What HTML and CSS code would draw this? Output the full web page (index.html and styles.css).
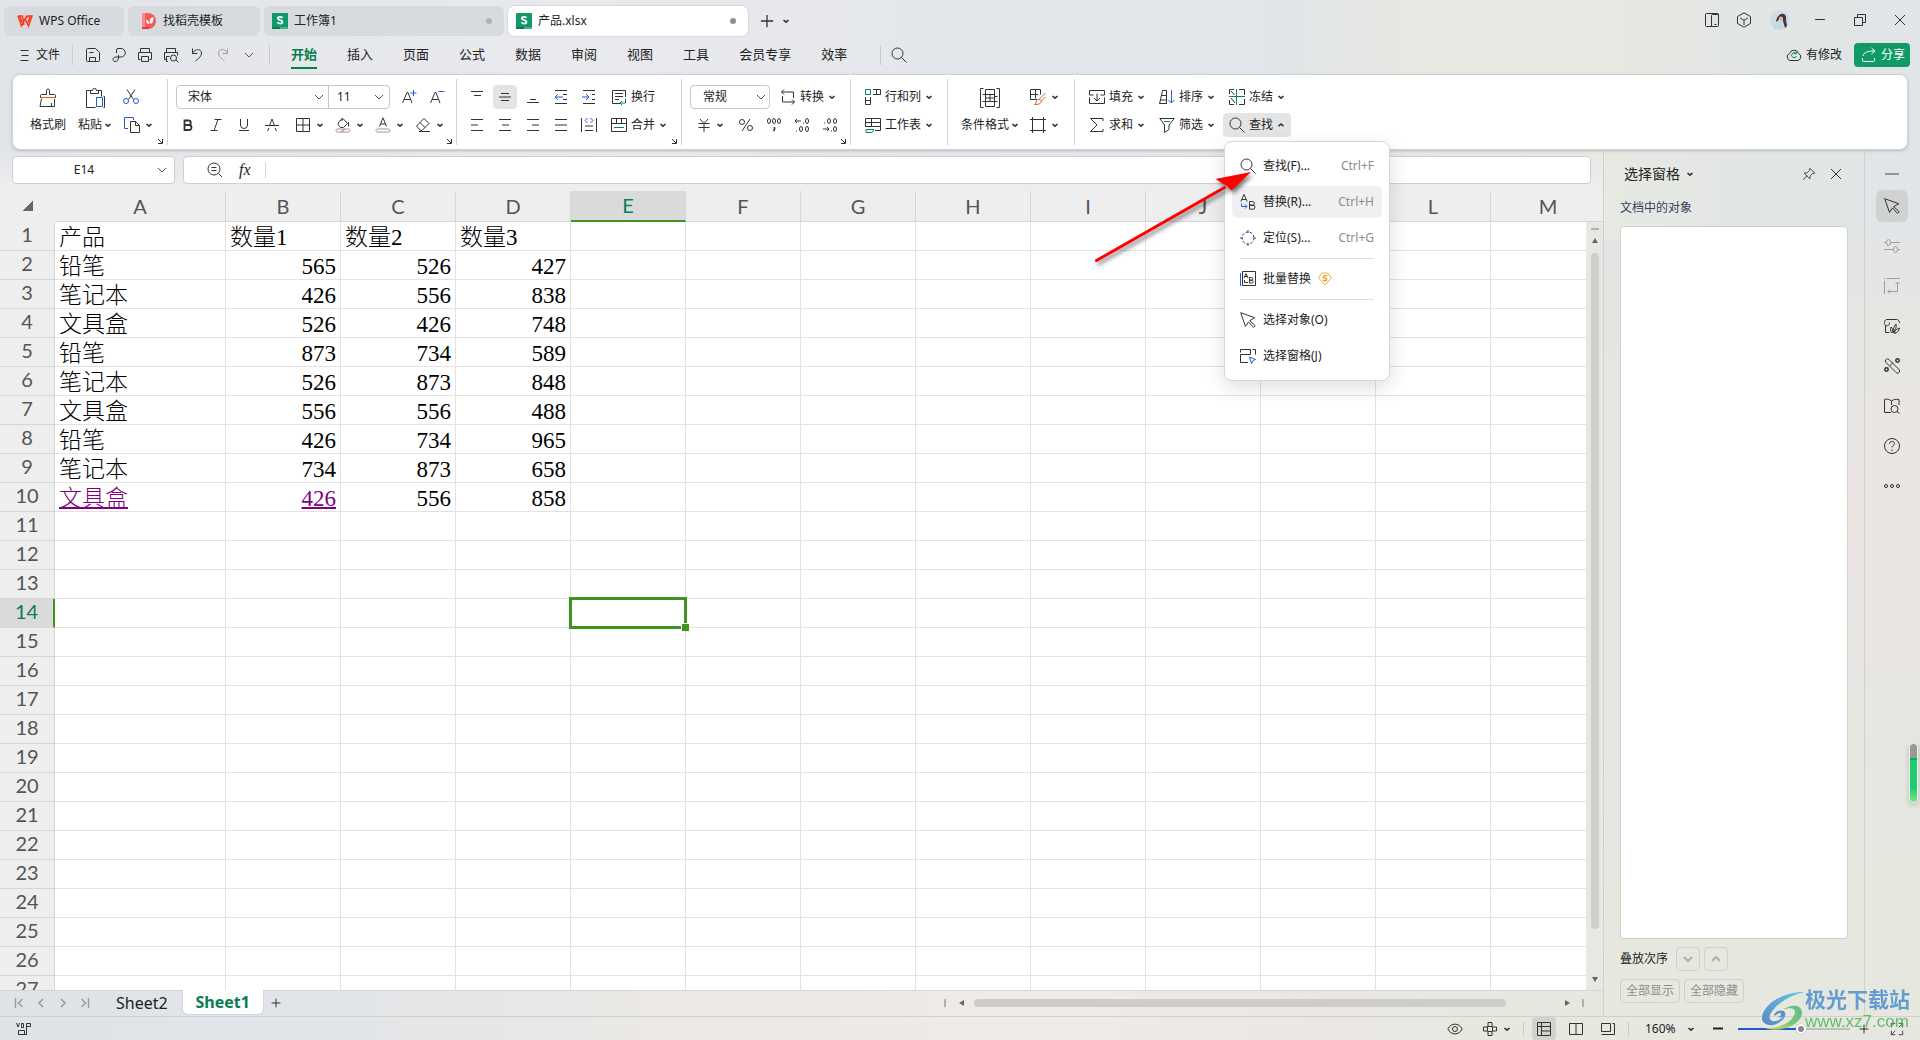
FILE: index.html
```html
<!DOCTYPE html>
<html lang="zh-CN">
<head>
<meta charset="utf-8">
<title>产品.xlsx - WPS Office</title>
<link rel="stylesheet" href="styles.css">
</head>
<body>
<svg class="sprite" aria-hidden="true">
  <symbol id="chev" viewBox="0 0 8 8"><path d="M1.5 3 4 5.2 6.5 3" stroke-width="1.6"/></symbol>
  <symbol id="chev-up" viewBox="0 0 8 8"><path d="M1.5 5.2 4 3 6.5 5.2" stroke-width="1.6"/></symbol>
  <symbol id="chev-wide" viewBox="0 0 10 10"><path d="M1 3l4 4 4-4"/></symbol>
  <symbol id="chev-wide-up" viewBox="0 0 10 10"><path d="M1 7l4-4 4 4"/></symbol>
  <symbol id="launch" viewBox="0 0 6 6"><path d="M1 1l4 4M5.5 1v4.500H1"/></symbol>
  <symbol id="sheet" viewBox="0 0 16 16"><rect width="16" height="16" rx="1" fill="#0f9a68" stroke="none"/><path d="M0 14h8v2H1a1 1 0 0 1-1-1z" fill="#087a50" stroke="none"/><path d="M8 14h8v1a1 1 0 0 1-1 1H8z" fill="#43b58b" stroke="none"/><path d="M10.500 4.800C10 3.600 6 3.300 5.800 5.300c0 2.200 4.700 1.300 4.700 3.600 0 2.200-4.400 2-5 .4" stroke="#fff" stroke-width="1.800"/></symbol>
  <symbol id="wps" viewBox="0 0 16 12"><path d="M1 1h4.500l1.500 9M1 1l3.500 10L8 4l3.500 7L15 1h-4l-3 3M8.500 1.200h3M3 1.500l2 6M13 1.500l-2 6" stroke="#fb3a22" stroke-width="1.500"/></symbol>
  <symbol id="docer" viewBox="0 0 16 16"><path d="M1 0h6a8 8 0 0 1 0 16H1z" fill="#f25c5c" stroke="none"/><path d="M1 0h3v16H1z" fill="#f78c8c" stroke="none"/><path d="M1 14h7v2H1z" fill="#e03b40" stroke="none"/><path d="M5 7c2 0 3 2 3 4C6 11 5 9 5 7zM12 4C9 5 8 8 9 11c3-1 4-4 3-7z" fill="#fff" stroke="none"/></symbol>
  <symbol id="plus" viewBox="0 0 16 16"><path d="M8 1v14M1 8h14" stroke-width="1.500"/></symbol>
  <symbol id="panel" viewBox="0 0 16 16"><rect x="1.500" y="1.500" width="13" height="13" rx="1"/><path d="M7.500 14.500v-11a1 1 0 0 1 1-1h6M10.500 12.500h2"/></symbol>
  <symbol id="cube" viewBox="0 0 16 16"><path d="M8 .8l6.500 3.700v7L8 15.200 1.500 11.500v-7zM4 6l4 2.300L12 6M8 8.300V13"/></symbol>
  <symbol id="minus" viewBox="0 0 12 12"><path d="M1 5.500h10"/></symbol>
  <symbol id="restore" viewBox="0 0 12 12"><path d="M.5 3.500h8v8h-8zM3.500 3.500v-3h8v8h-3"/></symbol>
  <symbol id="close" viewBox="0 0 12 12"><path d="M1 1l10 10M11 1L1 11"/></symbol>
  <symbol id="burger" viewBox="0 0 12 12"><path d="M1.500 1.500h8M2.500 6.500h7M1.500 11.500h8"/></symbol>
  <symbol id="save" viewBox="0 0 16 16"><path d="M1.500 2.500a1 1 0 0 1 1-1h8l4 4v8a1 1 0 0 1-1 1h-11a1 1 0 0 1-1-1zM4.500 14.500v-4h6v4M4.500 5.500h4"/></symbol>
  <symbol id="export" viewBox="0 0 16 16"><path d="M5.500 6V3a1.500 1.500 0 0 1 1.500-1.500h3a4 4 0 0 1 0 8.500H7.500c0 3-1 4.500-3.500 4.500-3 0-2.500-4.500.5-4.500H7.500V8"/></symbol>
  <symbol id="print" viewBox="0 0 16 16"><path d="M3.500 5V1.500h9V5M3.500 12.500h-2v-7h13v7h-2M4.500 9.500h7v5h-7z"/></symbol>
  <symbol id="preview" viewBox="0 0 16 16"><path d="M3.500 5V1.500h9V5M3.500 12.500h-2v-7h13v3M5 14.500H3.500v-5h3"/><circle cx="10.500" cy="11" r="3"/><path d="M13 13l2.500 2.500"/></symbol>
  <symbol id="undo" viewBox="0 0 16 16"><path d="M3.500 1.500v5h5M3.500 6.500c2-5 9-5 9-.5 0 4-4 6-6 8" /></symbol>
  <symbol id="redo" viewBox="0 0 16 16"><path d="M12.500 1.500v5h-5M12.500 6.500c-2-5-9-5-9-.5 0 4 4 6 6 8"/></symbol>
  <symbol id="find" viewBox="0 0 16 16"><circle cx="6.500" cy="6.500" r="5.500"/><path d="M10.500 10.500l5 5"/></symbol>
  <symbol id="cloud" viewBox="0 0 16 16"><path d="M4 13.500a3.700 3.700 0 0 1-.5-7 4.700 4.700 0 0 1 9 0 3.700 3.700 0 0 1-.5 7z"/><path class="g" d="M10 6.500A2.500 2.500 0 1 0 10.500 9M10.300 4.500v2.200H8"/></symbol>
  <symbol id="share" viewBox="0 0 16 16"><path d="M1.500 11v2.500a1 1 0 0 0 1 1h10a1 1 0 0 0 1-1V11M2 9c1-3.500 4-5 11-5M10.500 1L14 4l-3.500 3"/></symbol>
  <symbol id="brush" viewBox="0 0 20 20"><path d="M8.500 6.500V2.500a1.500 1.500 0 0 1 3 0v4h5a1 1 0 0 1 1 1v2h-15v-2a1 1 0 0 1 1-1zM3.500 10.500l-1.500 8h14.500V11M13.500 18.500V15"/><path class="o" d="M3 9.500h14"/></symbol>
  <symbol id="paste" viewBox="0 0 20 20"><path d="M5.500 2.500H1.500v17h9M13.500 2.500h3v6M5.500 2.500h2a2 2 0 0 1 4 0h2v3h-8zM18.500 8.500h1v11h-1"/><path class="b" d="M11.500 9.500h6v9h-6z"/></symbol>
  <symbol id="cut" viewBox="0 0 16 16"><path d="M4 .5l6.500 10M12 .5l-6.500 10"/><circle class="b" cx="3" cy="12" r="2.500"/><circle class="b" cx="13" cy="12" r="2.500"/></symbol>
  <symbol id="copy" viewBox="0 0 16 16"><path class="b" d="M4 11.500H.5V.5h9V3"/><path d="M6.500 4.500h5l4 4v7h-9zM11.500 4.500v4h4"/></symbol>
  <symbol id="bigger" viewBox="0 0 16 16"><path d="M1.500 14L6 3.500h1L11 14M3 10.500h6.500"/><path class="b" d="M12.500 1v6M9.500 4h6"/></symbol>
  <symbol id="smaller" viewBox="0 0 16 16"><path d="M1.500 14L6 3.500h1L11 14M3 10.500h6.500"/><path class="b" d="M9.500 2.500h6"/></symbol>
  <symbol id="bold" viewBox="0 0 16 16"><path d="M4.500 3.500h4a2.200 2.200 0 0 1 0 4.500h-4zM4.500 8h4.500a2.400 2.400 0 0 1 0 5H4.500z" stroke-width="1.800"/></symbol>
  <symbol id="italic" viewBox="0 0 16 16"><path d="M6.500 2.500h7M2.500 13.500h7M10 2.500l-4 11"/></symbol>
  <symbol id="under" viewBox="0 0 16 16"><path d="M4.500 2v6a3.500 3.500 0 0 0 7 0V2M3 13.500h10"/></symbol>
  <symbol id="strike" viewBox="0 0 16 16"><path d="M1 8.500h14M5.500 8.500L8 2l2.500 6.500M3.500 14l1.500-3M12.500 14L11 11"/></symbol>
  <symbol id="borders" viewBox="0 0 16 16"><path d="M1.500 1.500h13v13h-13zM8 1.500v13M1.500 8h13"/></symbol>
  <symbol id="fill" viewBox="0 0 16 16"><path d="M4 4.500l4-3 4.500 5-4 4H5.500L3 7.500zM7 1v3M13.500 5v4.500"/><rect x="1" y="12" width="14" height="3" rx="1.500" stroke="#999"/><path class="r" d="M6 15l4-3"/></symbol>
  <symbol id="color" viewBox="0 0 16 16"><path d="M4.500 9.500L8 .8l3.500 8.700M5.500 7h5"/><rect x="1" y="12" width="14" height="3" rx="1.500" stroke="#999"/></symbol>
  <symbol id="erase" viewBox="0 0 16 16"><path d="M1.500 9L9 1.500l5 5L7 13.500H5.500zM5 5.500l5 5M4 14.500h11"/></symbol>
  <symbol id="at" viewBox="0 0 16 16"><path d="M2 2.500h12M5 6.500h7"/></symbol>
  <symbol id="am" viewBox="0 0 16 16"><path d="M4 4.500h8M2 8h12M4 11.500h8"/></symbol>
  <symbol id="ab" viewBox="0 0 16 16"><path d="M5 10.500h6M2 13.500h12"/></symbol>
  <symbol id="ind-l" viewBox="0 0 16 16"><path d="M2 1.500h12M10 5.500h4M10 10.500h4M2 14.500h12"/><path class="b" d="M2 8h8M5 5L2 8l3 3"/></symbol>
  <symbol id="ind-r" viewBox="0 0 16 16"><path d="M2 1.500h12M11 5.500h3M11 10.500h3M2 14.500h12"/><path class="b" d="M1 8h7M5 5l3 3-3 3"/></symbol>
  <symbol id="al" viewBox="0 0 16 16"><path d="M2 2.500h12M2 8h7M2 13.500h12"/></symbol>
  <symbol id="ac" viewBox="0 0 16 16"><path d="M2 2.500h12M5 8h7M2 13.500h12"/></symbol>
  <symbol id="ar" viewBox="0 0 16 16"><path d="M2 2.500h12M7 8h7M2 13.500h12"/></symbol>
  <symbol id="aj" viewBox="0 0 16 16"><path d="M2 2.500h12M2 8h12M2 13.500h12"/></symbol>
  <symbol id="dist" viewBox="0 0 16 16"><path d="M.5 1v14M15.500 1v14M4 9h8M4 13.500h8"/><path class="b" d="M6.500 1L4 3.500 6.500 6M9.500 1L12 3.500 9.500 6"/></symbol>
  <symbol id="wrap" viewBox="0 0 16 16"><path d="M9 14.500H1.500v-13h13V8M4 4.500h8M4 7.500h8M4 10.500h4"/><path class="g" d="M14.500 9.500v4.500h-5M11 12l-2 2 2 2"/></symbol>
  <symbol id="merge" viewBox="0 0 16 16"><path d="M.5 1.500h15v13H.5zM.5 6.500h15M5.500 1.500v5M10.500 1.500v5"/><path class="g" d="M3 10.500h10"/></symbol>
  <symbol id="convert" viewBox="0 0 16 16"><path d="M4 .5L1.500 3 4 5.500M1.500 3h12v6M2.500 7v6h12M12 10.500l2.500 2.500-2.500 2.500"/></symbol>
  <symbol id="yen" viewBox="0 0 16 16"><path d="M4 2l4 4.500L12 2M2.500 6.500h11M2.500 10.500h11M8 6.500V15"/></symbol>
  <symbol id="pct" viewBox="0 0 16 16"><circle cx="4" cy="5" r="2.500"/><circle cx="12" cy="11" r="2.500"/><path d="M12 2L4 14"/></symbol>
  <symbol id="thou" viewBox="0 0 16 16"><ellipse cx="3" cy="4" rx="1.500" ry="2.500"/><ellipse cx="8" cy="4" rx="1.500" ry="2.500"/><ellipse cx="13" cy="4" rx="1.500" ry="2.500"/><path d="M8.500 10v2.500L7.500 14" stroke-width="1.600"/></symbol>
  <symbol id="dec-l" viewBox="0 0 16 16"><path d="M1 4h6M3 2L1 4l2 2M9 6h1M2 14h1"/><ellipse cx="13" cy="4" rx="1.500" ry="2.500"/><ellipse cx="7" cy="12" rx="1.500" ry="2.500"/><ellipse cx="13" cy="12" rx="1.500" ry="2.500"/></symbol>
  <symbol id="dec-r" viewBox="0 0 16 16"><path d="M1 12h6M5 10l2 2-2 2M9 14h1M2 6h1"/><ellipse cx="7" cy="4" rx="1.500" ry="2.500"/><ellipse cx="13" cy="4" rx="1.500" ry="2.500"/><ellipse cx="13" cy="12" rx="1.500" ry="2.500"/></symbol>
  <symbol id="rowcol" viewBox="0 0 16 16"><path class="g" d="M.5.5h5v5h-5z"/><path d="M8 .5h7.500v5H8M11.500.5v5M.5 8v7.500h5V8M.5 11.500h5"/></symbol>
  <symbol id="worksheet" viewBox="0 0 16 16"><path d="M.5 10V1.500h15v12H10M.5 5.500h15M6.500 1.500v8M.5 9.500h15"/><path class="g" d="M1 12.500h8l-2 3H1z"/></symbol>
  <symbol id="cond" viewBox="0 0 20 20"><path d="M3.500.5h-3v19h3M16.500.5h3v19h-3M5.500 1.500h9v17h-9zM5.500 6.500h9M2.500 6.500h3M2.500 13.500h15M14.500 8.500h3M10 6.500v7M5.500 10h9"/></symbol>
  <symbol id="tstyle" viewBox="0 0 16 16"><path d="M7 10.500H.5V.5h10v5M.5 5.500H8M5.500.5v9"/><path class="o" d="M15.500 4L9 10.500M15.500 8l-4 4M4.500 15.500c2 0 1-4 3.500-5 3-.5 4 2 2.500 3.500-1.500 1.500-4 1.500-6 1.500z"/></symbol>
  <symbol id="cellfmt" viewBox="0 0 16 16"><path d="M2.500 0v16M13.500 0v16M0 2.500h16M0 13.500h16"/></symbol>
  <symbol id="infill" viewBox="0 0 16 16"><path d="M.5 6V1.500h15V6M.5 6h4M11.500 6h4M.5 8.500v6h15v-6M8 4.500v7M5 9l3 3 3-3"/></symbol>
  <symbol id="sort" viewBox="0 0 16 16"><path d="M.5 15L3.500 1.500h4V15M1.500 11h6M2.500 6.500h5M.5 14.500h7"/><path class="b" d="M12.500 1v13M9.500 11l3 3 3-3"/></symbol>
  <symbol id="freeze" viewBox="0 0 16 16"><path d="M.5 5V.5H5M.5 11v4.500H5M10 .5h5.500V6M10 15.500h5.500V10M2 2l3.500 4M2 9l4 5"/><path class="g" d="M7.500 0v16M0 7.500h16"/></symbol>
  <symbol id="sum" viewBox="0 0 16 16"><path d="M14 4V1.500H1.500L8 8l-6.500 6.500H14V12"/></symbol>
  <symbol id="filter" viewBox="0 0 16 16"><path d="M.8 1.500h14.400L10 8v4.500l-4.500 3V8z"/><path class="g" d="M5 4.500h6"/></symbol>
  <symbol id="replace" viewBox="0 0 16 16"><path d="M.8 7.500L4 .5l3.200 7M2 5.500h4M9.500 7.500h3a1.800 1.800 0 0 1 0 3.700h-3zM9.500 11.200h3.500a2 2 0 0 1 0 4H9.500z"/><path class="b" d="M1.500 9.500v3h5M5 10.500l2 2-2 2"/></symbol>
  <symbol id="locate" viewBox="0 0 16 16"><circle cx="8" cy="8" r="6" stroke-dasharray="2.500 1.700"/><path class="b" d="M8 0v3M8 13v3M0 8h3M13 8h3"/></symbol>
  <symbol id="batch" viewBox="0 0 16 16"><path class="b" d="M.5 2v13"/><path d="M2.500.5h13v14h-13zM4 7l2-4.500L8 7M4.500 5.500h3M4.500 9v2.500H8M9.500 6.500h2a1.300 1.300 0 0 1 0 2.700h-2zM9.500 9.200h2.300a1.400 1.400 0 0 1 0 2.800H9.500z"/></symbol>
  <symbol id="coin" viewBox="0 0 14 14"><path d="M4 1h6l3.500 5L7 13 .5 6z" stroke="#f0ad3c"/><path d="M9 4.200C8 3.200 5 3.400 5.200 5c0 1.500 3.500.8 3.500 2.500 0 1.700-2.700 1.500-3.700.7" stroke="#f0a020" stroke-width="1.500"/></symbol>
  <symbol id="pointer" viewBox="0 0 16 16"><path d="M.7.7l14 5-5 3 5.500 5-1.700 1.700-5-5.500-3 4.500z"/></symbol>
  <symbol id="selpane" viewBox="0 0 16 16"><path d="M.5 4.500v-3h10v5M12.500 1.500h3v5M.5 6.500h10M.5 6.500v8H8"/><path class="b" d="M9.500 9l6 2.500-2.500 1-1.500 3z"/></symbol>
  <symbol id="zoomout" viewBox="0 0 16 16"><circle cx="7" cy="7" r="6"/><path d="M4.500 5.500h5M4.500 8.500h5M11.500 11.500l3.500 3.500"/></symbol>
  <symbol id="pin" viewBox="0 0 16 16"><path d="M9 1.500L14.500 7 12 7.500 9.500 10l-.5 3.500L2.500 7 6 6.500 8.500 4zM5.500 10L1.500 14.500"/></symbol>
  <symbol id="sliders" viewBox="0 0 16 16"><path d="M0 4.500h2.500M7 4.500h9M0 11.500h9M14 11.500h2"/><ellipse cx="4.500" cy="4.500" rx="2" ry="3"/><ellipse cx="11.500" cy="11.500" rx="2" ry="3"/></symbol>
  <symbol id="resize" viewBox="0 0 16 16"><path d="M0 .5h1.500M3 .5h13M.5 3v13M13.500 5v8.500H4M11.500 6l2-2 2 2M6 11.500l-2 2 2 2"/></symbol>
  <symbol id="beautify" viewBox="0 0 16 16"><path d="M5.500 14.500h-4v-7C-.5 5 .5 1.500 3 1.500h9.500c2 0 3 1.500 3 3.500M1.500 7.500c3 1 4-1 4-3M7 9c2 1.500 2 4 1 6-1.500-1.500-2-4-1-6zM12 6c1 3-1 6-2.500 9-.5-4 .5-7 2.500-9zM15.500 10c-.5 3-2.500 5-5 5.500 0-3 2.500-5 5-5.500z"/></symbol>
  <symbol id="tools" viewBox="0 0 16 16"><path d="M5 1.500l10 10a2 2 0 0 1-3 3l-10-10a2 2 0 0 1 3-3zM5.500 8L9 4.500"/><circle cx="13.500" cy="2.500" r="1.700" stroke-width="1.500"/><circle cx="2.500" cy="11.500" r="1.700" stroke-width="1.500"/></symbol>
  <symbol id="book" viewBox="0 0 16 16"><path d="M7 14.500H.5V1.500c3-1 5 0 7 1.500 2-1.500 4-2 7.500-1.500V7M7.500 3v4"/><circle cx="10.500" cy="11" r="3.500"/><path d="M13 13.500l2.500 2"/></symbol>
  <symbol id="help" viewBox="0 0 16 16"><circle cx="8" cy="8" r="7.500"/><path d="M5.500 6c0-3.500 5-3.300 5-.5 0 1.800-2.500 2-2.500 4M8 11.500v1.500"/></symbol>
  <symbol id="more" viewBox="0 0 16 16"><circle cx="2" cy="8" r="1.500"/><circle cx="8" cy="8" r="1.500"/><circle cx="14" cy="8" r="1.500"/></symbol>
  <symbol id="first" viewBox="0 0 10 10"><path d="M1.500 0v10M8.500 1l-4 4 4 4"/></symbol>
  <symbol id="prev" viewBox="0 0 10 10"><path d="M7 1L3 5l4 4"/></symbol>
  <symbol id="next" viewBox="0 0 10 10"><path d="M3 1l4 4-4 4"/></symbol>
  <symbol id="last" viewBox="0 0 10 10"><path d="M8.500 0v10M1.500 1l4 4-4 4"/></symbol>
  <symbol id="macro" viewBox="0 0 16 16"><path d="M.5 2l1.500 4L3.500 2M5.500 2.500v4M5.500 2.500h2v4h-2M10.500 13V2.500h4v3h-4M2.500 13.500v-4h6v4zM2.500 13.500H11"/></symbol>
  <symbol id="eye" viewBox="0 0 16 16"><path d="M.8 8C4 1.500 12 1.500 15.200 8 12 14.500 4 14.500.8 8z"/><circle cx="8" cy="8" r="2.500"/></symbol>
  <symbol id="cross" viewBox="0 0 16 16"><path d="M6 5V1.500h4V5M6 11v3.500h4V11M5 6H1.500v4H5M11 6h3.500v4H11M5.500 5.500h5v5h-5z"/></symbol>
  <symbol id="v-normal" viewBox="0 0 16 16"><path d="M1.500 1.500h13v13h-13zM1.500 5.500h13M5.500 1.500v13M5.500 10h9"/></symbol>
  <symbol id="v-page" viewBox="0 0 16 16"><path d="M1.500 2.500h13v11h-13zM8 2.500v11"/></symbol>
  <symbol id="v-read" viewBox="0 0 16 16"><path d="M1.500 2.500h9v8h-9zM1.500 13.500h13V2.500h-2"/></symbol>
  <symbol id="full" viewBox="0 0 16 16"><path d="M10 1.500h4.500V6M14.500 1.500L10 6M6 14.500H1.500V10M1.500 14.500L6 10M1.500 6V1.500H6M14.500 10v4.500H10"/></symbol>
</svg>

<header class="tabs">
  <button class="tab t-home"><svg class="i16"><use href="#wps"/></svg>WPS Office</button>
  <button class="tab t-docer"><svg class="i16"><use href="#docer"/></svg>找稻壳模板</button>
  <button class="tab t-file"><svg class="i16"><use href="#sheet"/></svg>工作簿1<i class="dot"></i></button>
  <button class="tab t-file active"><svg class="i16"><use href="#sheet"/></svg>产品.xlsx<i class="dot"></i></button>
  <button class="plain" aria-label="新建"><svg class="i14"><use href="#plus"/></svg></button>
  <button class="plain" aria-label="标签列表"><svg class="c8"><use href="#chev"/></svg></button>
  <div class="win">
    <button class="plain narrow" aria-label="面板"><svg class="i16"><use href="#panel"/></svg></button>
    <button class="plain narrow" aria-label="应用"><svg class="i16"><use href="#cube"/></svg></button>
    <button class="plain" aria-label="账号"><svg class="avatar" viewBox="0 0 20 20"><circle cx="10" cy="10" r="10" fill="#cfdde6"/><path d="M11 4c3-1 6 1 5 6l1 6-2 2-2-7-1-3-3 1-2 3-1-1c1-3 2-6 5-7z" fill="#44353c"/><path d="M9 8c1-2 4-2 4 1s-2 4-3 3z" fill="#e2b5ac"/><path d="M3 18l3-6 4-1 3 2v6c-4 1-7 1-10-1z" fill="#c3dbe4"/></svg></button>
    <button class="plain" aria-label="最小化"><svg class="i12"><use href="#minus"/></svg></button>
    <button class="plain" aria-label="还原"><svg class="i12"><use href="#restore"/></svg></button>
    <button class="plain" aria-label="关闭"><svg class="i12"><use href="#close"/></svg></button>
  </div>
</header>

<nav class="menubar">
  <button class="plain file"><svg class="i12"><use href="#burger"/></svg>文件</button>
  <i class="bar"></i>
  <div class="quick">
    <button class="plain" aria-label="保存"><svg class="i16"><use href="#save"/></svg></button>
    <button class="plain" aria-label="输出"><svg class="i16"><use href="#export"/></svg></button>
    <button class="plain" aria-label="打印"><svg class="i16"><use href="#print"/></svg></button>
    <button class="plain" aria-label="打印预览"><svg class="i16"><use href="#preview"/></svg></button>
    <button class="plain" aria-label="撤销"><svg class="i16"><use href="#undo"/></svg></button>
    <button class="plain dim" aria-label="恢复"><svg class="i16"><use href="#redo"/></svg></button>
    <button class="plain" aria-label="更多"><svg class="i10"><use href="#chev-wide"/></svg></button>
  </div>
  <i class="bar"></i>
  <div class="menus">
    <a href="#start" class="on">开始</a><a href="#insert">插入</a><a href="#page">页面</a><a href="#formula">公式</a><a href="#data">数据</a><a href="#review">审阅</a><a href="#view">视图</a><a href="#tool">工具</a><a href="#member">会员专享</a><a href="#effect">效率</a>
  </div>
  <i class="bar"></i>
  <button class="plain search" aria-label="搜索"><svg class="i16"><use href="#find"/></svg></button>
  <button class="plain changed"><svg class="i16"><use href="#cloud"/></svg>有修改</button>
  <button class="share"><svg class="i16"><use href="#share"/></svg>分享</button>
</nav>

<section class="ribbon">
  <div class="group g-clip">
    <button class="tall"><svg class="i20"><use href="#brush"/></svg><span>格式刷</span></button>
    <button class="tall"><svg class="i20"><use href="#paste"/></svg><span>粘贴<svg class="c8"><use href="#chev"/></svg></span></button>
    <div class="rows">
      <div class="row"><button class="sq" aria-label="剪切"><svg class="i16"><use href="#cut"/></svg></button></div>
      <div class="row"><button class="dd" aria-label="复制"><svg class="i16"><use href="#copy"/></svg><svg class="c8"><use href="#chev"/></svg></button></div>
    </div>
    <svg class="launch"><use href="#launch"/></svg>
  </div>
  <div class="group g-font">
    <div class="rows">
      <div class="row">
        <div class="pick fontpick">
          <select class="fname" aria-label="字体"><option>宋体</option></select><svg class="i10"><use href="#chev-wide"/></svg>
          <select class="fsize" aria-label="字号"><option>11</option></select><svg class="i10"><use href="#chev-wide"/></svg>
        </div>
        <button class="sq grow" aria-label="增大字号"><svg class="i16"><use href="#bigger"/></svg></button>
        <button class="sq" aria-label="减小字号"><svg class="i16"><use href="#smaller"/></svg></button>
      </div>
      <div class="row">
        <button class="sq" aria-label="加粗"><svg class="i16"><use href="#bold"/></svg></button>
        <button class="sq" aria-label="倾斜"><svg class="i16"><use href="#italic"/></svg></button>
        <button class="sq" aria-label="下划线"><svg class="i16"><use href="#under"/></svg></button>
        <button class="sq" aria-label="删除线"><svg class="i16"><use href="#strike"/></svg></button>
        <button class="dd" aria-label="边框"><svg class="i16"><use href="#borders"/></svg><svg class="c8"><use href="#chev"/></svg></button>
        <button class="dd" aria-label="填充颜色"><svg class="i16"><use href="#fill"/></svg><svg class="c8"><use href="#chev"/></svg></button>
        <button class="dd" aria-label="字体颜色"><svg class="i16"><use href="#color"/></svg><svg class="c8"><use href="#chev"/></svg></button>
        <button class="dd" aria-label="清除"><svg class="i16"><use href="#erase"/></svg><svg class="c8"><use href="#chev"/></svg></button>
      </div>
    </div>
    <svg class="launch"><use href="#launch"/></svg>
  </div>
  <div class="group g-align">
    <div class="rows">
      <div class="row">
        <button class="sq" aria-label="顶端对齐"><svg class="i16"><use href="#at"/></svg></button>
        <button class="sq pressed" aria-label="垂直居中"><svg class="i16"><use href="#am"/></svg></button>
        <button class="sq" aria-label="底端对齐"><svg class="i16"><use href="#ab"/></svg></button>
        <button class="sq" aria-label="减少缩进"><svg class="i16"><use href="#ind-l"/></svg></button>
        <button class="sq" aria-label="增加缩进"><svg class="i16"><use href="#ind-r"/></svg></button>
        <button class="lb"><svg class="i16"><use href="#wrap"/></svg>换行</button>
      </div>
      <div class="row">
        <button class="sq" aria-label="左对齐"><svg class="i16"><use href="#al"/></svg></button>
        <button class="sq" aria-label="水平居中"><svg class="i16"><use href="#ac"/></svg></button>
        <button class="sq" aria-label="右对齐"><svg class="i16"><use href="#ar"/></svg></button>
        <button class="sq" aria-label="两端对齐"><svg class="i16"><use href="#aj"/></svg></button>
        <button class="sq" aria-label="分散对齐"><svg class="i16"><use href="#dist"/></svg></button>
        <button class="lb"><svg class="i16"><use href="#merge"/></svg>合并<svg class="c8"><use href="#chev"/></svg></button>
      </div>
    </div>
    <svg class="launch"><use href="#launch"/></svg>
  </div>
  <div class="group g-num">
    <div class="rows">
      <div class="row">
        <div class="pick numpick"><select aria-label="数字格式"><option>常规</option></select><svg class="i10"><use href="#chev-wide"/></svg></div>
        <button class="lb"><svg class="i16"><use href="#convert"/></svg>转换<svg class="c8"><use href="#chev"/></svg></button>
      </div>
      <div class="row">
        <button class="dd" aria-label="货币"><svg class="i16"><use href="#yen"/></svg><svg class="c8"><use href="#chev"/></svg></button>
        <button class="sq" aria-label="百分比"><svg class="i16"><use href="#pct"/></svg></button>
        <button class="sq" aria-label="千位分隔"><svg class="i16"><use href="#thou"/></svg></button>
        <button class="sq" aria-label="增加小数"><svg class="i16"><use href="#dec-l"/></svg></button>
        <button class="sq" aria-label="减少小数"><svg class="i16"><use href="#dec-r"/></svg></button>
      </div>
    </div>
    <svg class="launch"><use href="#launch"/></svg>
  </div>
  <div class="group g-rows">
    <div class="rows">
      <div class="row"><button class="lb"><svg class="i16"><use href="#rowcol"/></svg>行和列<svg class="c8"><use href="#chev"/></svg></button></div>
      <div class="row"><button class="lb"><svg class="i16"><use href="#worksheet"/></svg>工作表<svg class="c8"><use href="#chev"/></svg></button></div>
    </div>
  </div>
  <div class="group g-style">
    <button class="tall"><svg class="i20"><use href="#cond"/></svg><span>条件格式<svg class="c8"><use href="#chev"/></svg></span></button>
    <div class="rows">
      <div class="row"><button class="dd" aria-label="表格样式"><svg class="i16"><use href="#tstyle"/></svg><svg class="c8"><use href="#chev"/></svg></button></div>
      <div class="row"><button class="dd" aria-label="单元格样式"><svg class="i16"><use href="#cellfmt"/></svg><svg class="c8"><use href="#chev"/></svg></button></div>
    </div>
  </div>
  <div class="group g-edit">
    <div class="rows">
      <div class="row">
        <button class="lb"><svg class="i16"><use href="#infill"/></svg>填充<svg class="c8"><use href="#chev"/></svg></button>
        <button class="lb"><svg class="i16"><use href="#sort"/></svg>排序<svg class="c8"><use href="#chev"/></svg></button>
        <button class="lb"><svg class="i16"><use href="#freeze"/></svg>冻结<svg class="c8"><use href="#chev"/></svg></button>
      </div>
      <div class="row">
        <button class="lb"><svg class="i16"><use href="#sum"/></svg>求和<svg class="c8"><use href="#chev"/></svg></button>
        <button class="lb"><svg class="i16"><use href="#filter"/></svg>筛选<svg class="c8"><use href="#chev"/></svg></button>
        <div class="findwrap">
          <button class="lb pressed"><svg class="i16"><use href="#find"/></svg>查找<svg class="c8"><use href="#chev-up"/></svg></button>
          <div class="popup" role="menu">
            <button role="menuitem"><svg class="i16"><use href="#find"/></svg>查找(F)...<kbd>Ctrl+F</kbd></button>
            <button role="menuitem" class="hover"><svg class="i16"><use href="#replace"/></svg>替换(R)...<kbd>Ctrl+H</kbd></button>
            <button role="menuitem"><svg class="i16"><use href="#locate"/></svg>定位(S)...<kbd>Ctrl+G</kbd></button>
            <hr>
            <button role="menuitem"><svg class="i16"><use href="#batch"/></svg>批量替换<svg class="i14"><use href="#coin"/></svg></button>
            <hr>
            <button role="menuitem"><svg class="i16"><use href="#pointer"/></svg>选择对象(O)</button>
            <button role="menuitem"><svg class="i16"><use href="#selpane"/></svg>选择窗格(J)</button>
            <svg class="arrow" viewBox="0 0 170 104"><path d="M7.500 91.500l128-73" stroke="#fe0000" stroke-width="3" stroke-linecap="round"/><path d="M162 3l-19.500 18.500-4.500-4.500-11.500-7z" fill="#fe0000"/></svg>
          </div>
        </div>
      </div>
    </div>
  </div>
</section>

<main class="work">
  <section class="book">
    <div class="formula">
      <label class="namebox"><input value="E14" aria-label="名称框"><svg class="i10"><use href="#chev-wide"/></svg></label>
      <div class="fbox"><svg class="i16"><use href="#zoomout"/></svg><em>fx</em><input aria-label="编辑栏"></div>
    </div>
    <div class="sheet">
      <div class="gridwrap">
        <table class="grid">
          <colgroup><col class="c-no"><col class="c-a"><col class="c-n" span="12"></colgroup>
          <thead><tr id="heads"></tr></thead>
          <tbody id="cells"></tbody>
        </table>
      </div>
      <div class="vscroll"><div class="corner"></div><i class="tick"></i><i class="tri up"></i><i class="thumb"></i><i class="tri down"></i></div>
    </div>
    <div class="sheetbar">
      <button class="plain" aria-label="首个"><svg class="i10"><use href="#first"/></svg></button>
      <button class="plain" aria-label="上一个"><svg class="i10"><use href="#prev"/></svg></button>
      <button class="plain" aria-label="下一个"><svg class="i10"><use href="#next"/></svg></button>
      <button class="plain" aria-label="末个"><svg class="i10"><use href="#last"/></svg></button>
      <button class="stab">Sheet2</button>
      <button class="stab on">Sheet1</button>
      <button class="plain add" aria-label="新建工作表"><svg class="i10"><use href="#plus"/></svg></button>
      <div class="hscroll"><i class="tick"></i><i class="tri left"></i><i class="thumb"></i><i class="tri right"></i><i class="tick"></i></div>
    </div>
  </section>
  <aside class="pane">
    <div class="phead"><h2>选择窗格</h2><svg class="c8"><use href="#chev"/></svg>
      <button class="plain pinbtn" aria-label="固定"><svg class="i14"><use href="#pin"/></svg></button>
      <button class="plain" aria-label="关闭窗格"><svg class="i12"><use href="#close"/></svg></button></div>
    <p>文档中的对象</p>
    <div class="objects"></div>
    <div class="order"><span>叠放次序</span><button class="ob" aria-label="下移"><svg class="i10"><use href="#chev-wide"/></svg></button><button class="ob" aria-label="上移"><svg class="i10"><use href="#chev-wide-up"/></svg></button></div>
    <div class="order vis"><button class="ob">全部显示</button><button class="ob">全部隐藏</button></div>
  </aside>
  <nav class="side">
    <svg class="collapse" viewBox="0 0 14 2"><path d="M0 1h14" stroke-width="2"/></svg>
    <button class="sb on" aria-label="选择"><svg class="i16"><use href="#pointer"/></svg></button>
    <button class="sb dim" aria-label="属性"><svg class="i16"><use href="#sliders"/></svg></button>
    <button class="sb dim" aria-label="调整"><svg class="i16"><use href="#resize"/></svg></button>
    <button class="sb" aria-label="美化"><svg class="i16"><use href="#beautify"/></svg></button>
    <button class="sb" aria-label="工具"><svg class="i16"><use href="#tools"/></svg></button>
    <button class="sb" aria-label="查阅"><svg class="i16"><use href="#book"/></svg></button>
    <button class="sb" aria-label="帮助"><svg class="i16"><use href="#help"/></svg></button>
    <button class="sb" aria-label="更多"><svg class="i16"><use href="#more"/></svg></button>
    <i class="meter"></i>
  </nav>
</main>

<footer class="status">
  <button class="plain" aria-label="宏"><svg class="i16"><use href="#macro"/></svg></button>
  <div class="views">
    <button class="sq" aria-label="护眼"><svg class="i16"><use href="#eye"/></svg></button>
    <button class="dd" aria-label="阅读布局"><svg class="i16"><use href="#cross"/></svg><svg class="c8"><use href="#chev"/></svg></button>
    <i class="bar"></i>
    <button class="vb on" aria-label="普通视图"><svg class="i16"><use href="#v-normal"/></svg></button>
    <button class="vb" aria-label="分页预览"><svg class="i16"><use href="#v-page"/></svg></button>
    <button class="vb" aria-label="页面布局"><svg class="i16"><use href="#v-read"/></svg></button>
    <i class="bar"></i>
    <button class="plain zoom">160%<svg class="c8"><use href="#chev"/></svg></button>
    <button class="plain bold" aria-label="缩小"><svg class="i12"><use href="#minus"/></svg></button>
    <input type="range" min="0" max="100" value="57" aria-label="缩放比例">
    <button class="plain bold" aria-label="放大"><svg class="i10"><use href="#plus"/></svg></button>
    <button class="plain fullbtn" aria-label="全屏"><svg class="i14"><use href="#full"/></svg></button>
  </div>
</footer>

<div class="mark">
  <svg viewBox="0 0 44 42"><defs><linearGradient id="ga" x1="0" y1="1" x2="1" y2="0"><stop offset="0" stop-color="#4a7fc4"/><stop offset="1" stop-color="#5cc4e8"/></linearGradient><linearGradient id="gb" x1="0" y1="1" x2="1" y2="0"><stop offset="0" stop-color="#e3e04a"/><stop offset=".5" stop-color="#6cc56c"/><stop offset="1" stop-color="#4fb888"/></linearGradient></defs><path d="M44 1C22 0 0 15 1 28c1 7 12 8 18 3 6-4 7-9 3-11 1 5-2 9-7 10-6 1-8-3-5-8C15 13 29 4 44 1z" fill="url(#ga)"/><path d="M4 37c11 1 28-5 30-15 1-5-6-6-12-3 5-5 18-7 19 2 1 12-22 22-37 16z" fill="url(#gb)"/><path d="M13 24c2-5 10-6 11-2 0 3-4 5-7 4 3-1 4-4 2-4-3 0-4 4-6 2z" fill="#4a86c8"/></svg>
  <div><strong>极光下载站</strong><span>www.xz7.com</span></div>
</div>
<script src="grid.js"></script>
</body>
</html>
```
FILE: styles.css
```css
* { box-sizing: border-box; }
body {
  margin: 0; height: 100vh; display: flex; flex-direction: column; overflow: hidden;
  font: 12px/16px "Noto Sans", "Noto Sans CJK SC", sans-serif; color: #222;
  background:
    radial-gradient(ellipse 500px 300px at 98% 50%, #ebe5e2, transparent),
    linear-gradient(90deg, #dfe3e8 0, #e2e5e8 18%, #ece9e5 35%, #efebe8 55%, #ebe7e4 68%, #e7e8e0 78%, #e6e8e0 100%) bottom / 100% 70px no-repeat,
    linear-gradient(90deg, #e1e4e9 0, #e9eaed 30%, #e3e6eb 52%, #e2e5e9 66%, #e7e9e2 75%, #e7e9e2 83%, #e1e5e4 93%, #e2e5e8 100%) top / 100% 240px no-repeat,
    linear-gradient(180deg, #e2e5e4, #e4e6e2 60%, #e7e9df);
}
button, input, select { font: inherit; color: inherit; margin: 0; padding: 0; border: 0; background: none; outline: 0; }
button { display: flex; align-items: center; white-space: nowrap; }
a { color: inherit; text-decoration: none; }
svg { fill: none; stroke: #333; stroke-width: 1; flex: none; display: block; }
.sprite { position: absolute; width: 0; height: 0; }
.g { stroke: #0b8457; } .b { stroke: #2a57e0; } .o { stroke: #d0602a; } .r { stroke: #e05050; }
.i20 { width: 20px; height: 20px; } .i16 { width: 16px; height: 16px; } .i14 { width: 14px; height: 14px; }
.i12 { width: 12px; height: 12px; } .i10 { width: 10px; height: 10px; stroke: #555; } .c8 { width: 8px; height: 8px; }
.bar { width: 1px; height: 20px; background: #c8cacd; }
.dim svg { stroke: #9b9d9e; }

.tabs { display: flex; align-items: flex-start; height: 40px; padding: 6px 0 0 4px; }
.tab { height: 30px; border-radius: 6px; background: #d7dade; margin-right: 4px; }
.tab .i16 { margin-right: 6px; }
.t-home { width: 120px; padding-left: 13px; }
.t-docer { width: 132px; padding-left: 13px; }
.t-file { width: 240px; padding: 0 12px 0 8px; }
.active { background: #fff; box-shadow: 0 0 2px #b5b8bb; }
.dot { width: 6px; height: 6px; border-radius: 3px; margin-left: auto; background: #b0b3b5; }
.active .dot { background: #8f8f8f; }
.tabs .plain { height: 30px; margin-left: 8px; }
.win { display: flex; margin-left: auto; align-items: center; }
.win .plain { margin-left: 0; width: 40px; justify-content: center; height: 28px; }
.tabs .win .plain { margin-left: 0; height: 28px; }
.win .narrow { width: 32px; }
.avatar { width: 20px; height: 20px; stroke: none; }

.menubar { display: flex; align-items: center; height: 34px; padding: 0 10px 4px 19px; }
.file { gap: 5px; width: 53px; }
.quick { display: flex; width: 196px; padding-left: 7px; }
.quick .plain { width: 26px; height: 26px; justify-content: center; }
.menus { display: flex; gap: 30px; margin-left: 21px; font-size: 13px; line-height: 24px; width: 589px; }
.menus a { height: 27px; border-bottom: 2px solid transparent; white-space: nowrap; }
.menus .on { color: #0a7d52; font-weight: 700; border-color: #0a7d52; }
.search { margin-left: 10px; }
.changed { margin-left: auto; gap: 4px; margin-right: 12px; }
.share { background: #0f9a68; color: #fff; height: 24px; width: 56px; border-radius: 4px; gap: 4px; padding-left: 7px; }
.share svg { stroke: #fff; }

.ribbon { display: flex; margin: 0 12px; min-height: 76px; background: #fff; border: 1px solid #cfd1d3; border-radius: 8px; box-shadow: 0 1px 3px #b9bbbe; padding: 4px 0; position: relative; z-index: 2; }
.group { position: relative; border-right: 1px solid #d2d2d2; height: 66px; padding-top: 6px; display: flex; }
.g-clip { width: 155px; padding-left: 17px; } .g-font { width: 289px; padding-left: 6px; } .g-align { width: 225px; padding-left: 6px; }
.g-num { width: 169px; padding-left: 8px; } .g-rows { width: 97px; padding-left: 10px; } .g-style { width: 127px; padding-left: 13px; } .g-edit { border: 0; padding-left: 8px; }
.rows { display: flex; flex-direction: column; gap: 4px; }
.row { display: flex; height: 24px; align-items: center; }
.sq { width: 28px; height: 24px; justify-content: center; border-radius: 4px; }
.pressed { background: #e4e4e4; }
.g-align .sq.pressed { width: 24px; margin: 0 2px; }
.dd { width: 40px; height: 24px; padding-left: 7px; gap: 5px; }
.g-font .dd { padding-left: 9px; }
.g-num .dd { width: 42px; padding-left: 6px; gap: 4px; }
.lb { height: 24px; padding: 0 6px 0 4px; gap: 4px; border-radius: 4px; }
.g-align .lb { padding-left: 8px; }
.g-edit .lb { margin-right: 2px; width: 68px; padding: 0 4px 0 6px; }
.tall { flex-direction: column; height: 52px; padding-top: 3px; }
.tall span { display: flex; align-items: center; gap: 2px; margin-top: 9px; }
.g-clip .tall + .tall { margin-left: 12px; }
.tall + .rows { margin-left: 4px; }
.g-clip .tall + .rows { margin-left: 5px; }
.launch { width: 6px; height: 6px; position: absolute; right: 4px; bottom: 1px; }
.pick { display: flex; align-items: center; height: 24px; border: 1px solid #c3c5c8; border-radius: 4px; }
.pick select { appearance: none; height: 22px; }
.fontpick { width: 214px; padding-right: 5px; margin-left: 2px; }
.fontpick .fname { flex: 1; padding-left: 11px; }
.fontpick .fsize { width: 46px; margin-left: 4px; padding-left: 8px; border-left: 1px solid #c3c5c8; }
.grow { margin-left: 5px; }
.numpick { width: 80px; padding: 0 3px 0 12px; }
.numpick select { flex: 1; width: 0; }
.g-num .numpick + .lb { padding-left: 10px; }

.findwrap { position: relative; }
.popup { position: absolute; left: 1px; top: 28px; width: 166px; padding: 8px 7px; display: flex; flex-direction: column; gap: 4px; background: #fff; border: 1px solid #d6d8da; border-radius: 8px; box-shadow: 0 6px 20px #0002; }
.popup button { height: 32px; padding: 0 8px; gap: 7px; border-radius: 6px; flex: none; }
.popup .hover { background: #f0f0f0; }
.popup kbd { margin-left: auto; font: inherit; color: #8c8c8c; }
.popup hr { border: 0; height: 1px; background: #ddd; margin: 0 8px; flex: none; }
.arrow { position: absolute; left: -136px; top: 27px; width: 170px; height: 104px; overflow: visible; stroke: none; filter: drop-shadow(2px 3px 2px #0008); pointer-events: none; }

.work { flex: 1; display: flex; min-height: 0; }
.book { flex: 1; min-width: 0; display: flex; flex-direction: column; }
.formula { display: flex; height: 41px; padding: 6px 12px 7px; gap: 8px; background: linear-gradient(#eee0, #eee); }
.namebox, .fbox { display: flex; align-items: center; height: 28px; background: #fff; border: 1px solid #cdcfd0; border-radius: 4px; }
.namebox { width: 163px; padding-right: 7px; }
.namebox input { flex: 1; width: 0; text-align: center; padding-right: 2px; }
.fbox { flex: 1; padding-left: 23px; }
.fbox em { font: italic 16px/20px "Liberation Serif", serif; margin-left: 16px; width: 26px; }
.fbox input { flex: 1; height: 16px; border-left: 1px solid #d5d5d5; }

.sheet { flex: 1; min-height: 0; display: flex; }
.gridwrap { flex: 1; overflow: hidden; background: #fff; min-width: 0; }
.grid { table-layout: fixed; border-collapse: separate; border-spacing: 0; width: 1606px; }
.c-no { width: 55px; } .c-a { width: 171px; } .c-n { width: 115px; }
.grid th, .grid td { padding: 0; height: 29px; border: 0 solid #e2e2e2; border-width: 0 1px 1px 0; }
.grid th { background: #eee; color: #555; font: 400 20px/24px Lato, sans-serif; border-color: #d6d6d6; }
.grid thead th { height: 31px; line-height: 29px; }
.grid thead th:first-child { border-color: #eee; }
.grid thead th.cur { background: #dadada; color: #0a7d52; border-bottom: 2px solid #419220; }
.grid tbody th { padding-bottom: 4px; }
.grid tbody th.cur { background: #dadada; color: #0a7d52; border-right: 2px solid #419220; }
.grid td { font: 23px/24px "Liberation Serif", "Noto Sans CJK SC", serif; color: #000; padding: 4px 4px 0; white-space: nowrap; font-weight: 300; }
.grid td.n { text-align: right; }
.grid td a { color: #800080; text-decoration: underline; text-decoration-thickness: 2px; }
.corner-tri { display: block; width: 10px; height: 10px; margin-left: 23px; background: linear-gradient(135deg, transparent 50%, #666 50%); }
.grid td.sel { position: relative; }
.sel::before { content: ""; position: absolute; inset: -2px -2px -2px -2px; border: 3px solid #419220; z-index: 1; }
.sel::after { content: ""; position: absolute; right: -4px; bottom: -4px; width: 7px; height: 7px; background: #419220; border: solid #fff; border-width: 1px 0 0 1px; z-index: 2; }
.vscroll { width: 17px; display: flex; flex-direction: column; align-items: center; background: #e6e8e3; }
.corner { width: 17px; height: 31px; background: #eee; border-bottom: 1px solid #d6d6d6; }
.tick { width: 8px; height: 2px; background: #b0b0ad; margin-top: 6px; flex: none; }
.tri { width: 0; height: 0; border: 3px solid transparent; flex: none; }
.up { border-bottom: 5px solid #666; margin-top: 8px; border-top: 0; }
.down { border-top: 5px solid #666; border-bottom: 0; margin-bottom: 8px; }
.left { border-right: 5px solid #666; border-left: 0; }
.right { border-left: 5px solid #666; border-right: 0; }
.vscroll .thumb { width: 8px; flex: 1; border-radius: 4px; background: #cdcfcb; margin: 10px 0 48px; }

.sheetbar { height: 26px; border-top: 1px solid #d4d6d6; display: flex; align-items: flex-start; padding-left: 14px; }
.sheetbar .plain { width: 22px; height: 24px; }
.sheetbar .plain svg { stroke: #9a9c9e; stroke-width: 1.500; }
.stab { font-size: 16px; line-height: 22px; height: 24px; padding: 0 12px; margin-left: 2px; }
.stab.on { background: #fff; color: #0a7d52; font-weight: 700; border: solid #d4d6d6; border-width: 0 1px 1px; border-radius: 0 0 6px 6px; margin-top: -1px; height: 25px; width: 82px; justify-content: center; }
.sheetbar .add { margin-left: 7px; }
.sheetbar .add svg { stroke: #222; stroke-width: 2; }
.hscroll { width: 640px; display: flex; align-items: center; margin-left: auto; height: 24px; margin-right: 19px; }
.hscroll .tick { width: 2px; height: 8px; margin: 0; }
.hscroll .left { margin: 0 10px 0 13px; }
.hscroll .thumb { height: 8px; border-radius: 4px; background: #cfcdca; flex: 1; margin-right: 59px; }
.hscroll .right { margin-right: 12px; }

.pane { width: 261px; border-left: 1px solid #cfd1cf; padding: 16px 16px 13px; display: flex; flex-direction: column; }
.phead { display: flex; align-items: center; height: 16px; padding: 0 6px 0 4px; gap: 6px; }
.phead h2 { font-size: 14px; font-weight: 400; margin: 0; }
.pinbtn { margin-left: auto; margin-right: 8px; }
.pane p { margin: 18px 0 10px; color: #37415c; }
.objects { flex: 1; background: #fff; border: 1px solid #cfd1cf; border-radius: 4px; }
.order { display: flex; align-items: center; gap: 4px; margin-top: 8px; height: 24px; }
.order span { margin-right: 4px; }
.ob { height: 24px; min-width: 24px; justify-content: center; border: 1px solid #cfd1cc; border-radius: 4px; color: #8d8f8c; padding: 0 5px; }
.ob svg { stroke: #adafac; stroke-width: 2; }
.order .ob svg { margin: 0 1px; }

.side { width: 56px; border-left: 1px solid #cfd1cf; padding-right: 1px; display: flex; flex-direction: column; align-items: center; gap: 8px; position: relative; }
.collapse { width: 14px; height: 2px; stroke: #929496; margin: 23px 0 7px; }
.sb { width: 32px; height: 32px; border-radius: 6px; justify-content: center; }
.sb.on { background: #d0d2d1; }
.meter { position: absolute; right: 3px; top: 594px; width: 7px; height: 58px; border-radius: 4px; background: linear-gradient(#999a98 0 14px, #14a957 14px 16px, #20ca70 16px 44px, #77ee81); box-shadow: 0 0 0 1px #eee, 0 2px 4px 2px #0002; }

.status { height: 24px; border-top: 1px solid #cfd1d1; display: flex; align-items: center; padding: 0 16px; overflow: hidden; }
.views { margin-left: auto; display: flex; align-items: center; height: 23px; }
.views .sq, .views .dd { height: 23px; }
.views .dd { margin-left: 5px; padding-left: 8px; }
.views .bar { height: 14px; }
.views .dd + .bar { margin-left: 9px; margin-right: 8px; }
.vb { width: 24px; height: 23px; border-radius: 4px; justify-content: center; margin-right: 8px; }
.vb.on { background: #d0d2cd; }
.zoom { gap: 11px; margin-left: 16px; width: 67px; }
.views .bold svg { stroke-width: 2; stroke: #222; }
.views input { appearance: none; width: 112px; height: 10px; margin: 0 9px 0 14px; background: linear-gradient(90deg, #2456dc 57%, #bdbfba 57%) center / 100% 2px no-repeat; }
.views input::-webkit-slider-thumb { appearance: none; width: 10px; height: 10px; border-radius: 5px; background: #8a8a8a; border: 2px solid #fff; box-shadow: 0 0 1px #777; }
.fullbtn { margin: 0 0 0 21px; }

.mark { position: absolute; right: 10px; bottom: 7px; display: flex; align-items: flex-end; z-index: 5; opacity: .9; pointer-events: none; }
.mark svg { width: 44px; height: 42px; stroke: none; }
.mark div { display: flex; flex-direction: column; }
.mark strong { font-size: 21px; line-height: 24px; color: #5795cf; }
.mark span { font: 17px/22px "Liberation Sans", sans-serif; color: #55b862; }
```
FILE: grid.js
```js
const data = [
  ["产品", "数量1", "数量2", "数量3"],
  ["铅笔", 565, 526, 427],
  ["笔记本", 426, 556, 838],
  ["文具盒", 526, 426, 748],
  ["铅笔", 873, 734, 589],
  ["笔记本", 526, 873, 848],
  ["文具盒", 556, 556, 488],
  ["铅笔", 426, 734, 965],
  ["笔记本", 734, 873, 658],
  ["文具盒", 426, 556, 858],
];
const links = { 10: [0, 1] };
const letters = [..."ABCDEFGHIJKLM"];
const current = { row: 14, col: 4 };

document.getElementById("heads").innerHTML =
  '<th><i class="corner-tri"></i></th>' +
  letters.map((l, c) => `<th scope="col"${c === current.col ? ' class="cur"' : ""}>${l}</th>`).join("");

let html = "";
for (let r = 1; r <= 27; r++) {
  html += `<tr><th scope="row"${r === current.row ? ' class="cur"' : ""}>${r}</th>`;
  letters.forEach((_, c) => {
    const v = data[r - 1]?.[c] ?? "";
    const cls = [typeof v === "number" ? "n" : "", r === current.row && c === current.col ? "sel" : ""].join(" ").trim();
    const text = links[r]?.includes(c) ? `<a href="#r${r}">${v}</a>` : v;
    html += `<td${cls ? ` class="${cls}"` : ""}>${text}</td>`;
  });
  html += "</tr>";
}
document.getElementById("cells").innerHTML = html;
```
